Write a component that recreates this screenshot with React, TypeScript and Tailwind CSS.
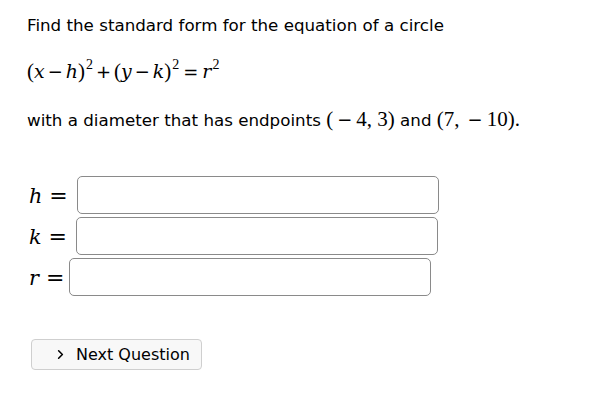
import { ChevronRight } from "lucide-react";

function Sup({ children }: { children: React.ReactNode }) {
  return <span className="relative -top-[9px] ml-[1px] text-[14px] not-italic leading-none">{children}</span>;
}

function V({ children }: { children: React.ReactNode }) {
  return <i className="font-['DejaVu_Serif',serif] text-[0.9em]">{children}</i>;
}

function Op({ children, className = "" }: { children: React.ReactNode; className?: string }) {
  return (
    <span className={`font-['DejaVu_Sans',sans-serif] text-[18px] font-normal leading-none ${className}`}>
      {children}
    </span>
  );
}

function Field({ label, widthClass }: { label: string; widthClass: string }) {
  return (
    <div className="flex h-[38px] items-center">
      <span className={`font-['Liberation_Serif',serif] ${widthClass} shrink-0 whitespace-nowrap text-[23px] leading-none text-black`}>
        <V>{label}</V>
        <span className="ml-[7px] font-['DejaVu_Sans',sans-serif] text-[22px]">=</span>
      </span>
      <input
        type="text"
        className="h-[38px] w-[362px] rounded-[5px] border border-[#8a8a8a] bg-white px-2 outline-none"
      />
    </div>
  );
}

export default function App() {
  return (
    <div className="min-h-screen bg-white px-[27px] pt-[15px] font-['DejaVu_Sans',sans-serif] text-[16.7px] text-black">
      <p className="leading-[20px]">Find the standard form for the equation of a circle</p>

      <p className="mt-[22px] h-[28px] font-['Liberation_Serif',serif] text-[21px] leading-[28px]">
        (<V>x</V>
        <Op className="mx-[3px]">−</Op>
        <V>h</V>)<Sup>2</Sup>
        <Op className="mx-[3px]">+</Op>(<V>y</V>
        <Op className="mx-[3px]">−</Op>
        <V>k</V>)<Sup>2</Sup>
        <Op className="mx-[4px]">=</Op>
        <V>r</V>
        <Sup>2</Sup>
      </p>

      <p className="mt-[20px] h-[28px] leading-[28px]">
        with a diameter that has endpoints{" "}
        <span className="font-['Liberation_Serif',serif] text-[21px]">
          (<Op className="mx-[4px]">−</Op>4, 3)
        </span>{" "}
        and{" "}
        <span className="font-['Liberation_Serif',serif] text-[21px]">
          (7,<Op className="ml-[8px] mr-[4px]">−</Op>10).
        </span>
      </p>

      <div className="mt-[43px] flex flex-col pl-[2px]">
        <Field label="h" widthClass="w-[48px]" />
        <div className="mt-[3px]">
          <Field label="k" widthClass="w-[47px]" />
        </div>
        <div className="mt-[3px]">
          <Field label="r" widthClass="w-[40px]" />
        </div>
      </div>

      <button className="mt-[43px] ml-[4px] flex h-[31px] w-[171px] items-center rounded-[4px] border border-[#cfcfcf] bg-[#f8f8f8] pl-[21px] text-[16px]">
        <ChevronRight className="h-[15px] w-[15px]" strokeWidth={2.5} />
        <span className="ml-[8px]">Next Question</span>
      </button>
    </div>
  );
}
